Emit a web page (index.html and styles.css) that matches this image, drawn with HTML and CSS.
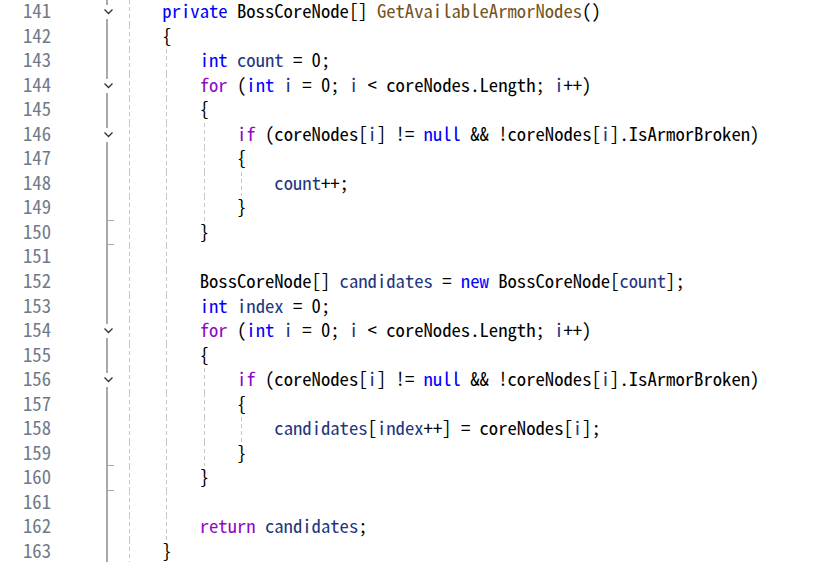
FILE: index.html
```html
<!DOCTYPE html>
<html>
<head>
<meta charset="utf-8">
<link rel="stylesheet" href="styles.css">
</head>
<body>
<div class="editor">
  <div class="row"><div class="ln">141</div><div class="fold"><svg class="chev" viewBox="0 0 11 14" width="11" height="14"><rect width="11" height="14" fill="#fff"/><polyline points="1.5,4.5 5.5,8.5 9.5,4.5" fill="none" stroke="#333" stroke-width="1.3"/></svg></div><div class="code"><span class="g"></span><span class="kw">private</span> BossCoreNode[] <span class="fn">GetAvailableArmorNodes</span>()</div></div>
  <div class="row"><div class="ln">142</div><div class="fold"></div><div class="code"><span class="g"></span>{</div></div>
  <div class="row"><div class="ln">143</div><div class="fold"></div><div class="code"><span class="g"></span><span class="g"></span><span class="kw">int</span> <span class="v">count</span> = 0;</div></div>
  <div class="row"><div class="ln">144</div><div class="fold"><svg class="chev" viewBox="0 0 11 14" width="11" height="14"><rect width="11" height="14" fill="#fff"/><polyline points="1.5,4.5 5.5,8.5 9.5,4.5" fill="none" stroke="#333" stroke-width="1.3"/></svg></div><div class="code"><span class="g"></span><span class="g"></span><span class="ctl">for</span> (<span class="kw">int</span> <span class="v">i</span> = 0; <span class="v">i</span> &lt; coreNodes.Length; <span class="v">i</span>++)</div></div>
  <div class="row"><div class="ln">145</div><div class="fold"></div><div class="code"><span class="g"></span><span class="g"></span>{</div></div>
  <div class="row"><div class="ln">146</div><div class="fold"><svg class="chev" viewBox="0 0 11 14" width="11" height="14"><rect width="11" height="14" fill="#fff"/><polyline points="1.5,4.5 5.5,8.5 9.5,4.5" fill="none" stroke="#333" stroke-width="1.3"/></svg></div><div class="code"><span class="g"></span><span class="g"></span><span class="g"></span><span class="ctl">if</span> (coreNodes[<span class="v">i</span>] != <span class="kw">null</span> &amp;&amp; !coreNodes[<span class="v">i</span>].IsArmorBroken)</div></div>
  <div class="row"><div class="ln">147</div><div class="fold"></div><div class="code"><span class="g"></span><span class="g"></span><span class="g"></span>{</div></div>
  <div class="row"><div class="ln">148</div><div class="fold"></div><div class="code"><span class="g"></span><span class="g"></span><span class="g"></span><span class="g"></span><span class="v">count</span>++;</div></div>
  <div class="row"><div class="ln">149</div><div class="fold end"></div><div class="code"><span class="g"></span><span class="g"></span><span class="g"></span>}</div></div>
  <div class="row"><div class="ln">150</div><div class="fold end"></div><div class="code"><span class="g"></span><span class="g"></span>}</div></div>
  <div class="row"><div class="ln">151</div><div class="fold"></div><div class="code"><span class="g"></span><span class="g"></span></div></div>
  <div class="row"><div class="ln">152</div><div class="fold"></div><div class="code"><span class="g"></span><span class="g"></span>BossCoreNode[] <span class="v">candidates</span> = <span class="kw">new</span> BossCoreNode[<span class="v">count</span>];</div></div>
  <div class="row"><div class="ln">153</div><div class="fold"></div><div class="code"><span class="g"></span><span class="g"></span><span class="kw">int</span> <span class="v">index</span> = 0;</div></div>
  <div class="row"><div class="ln">154</div><div class="fold"><svg class="chev" viewBox="0 0 11 14" width="11" height="14"><rect width="11" height="14" fill="#fff"/><polyline points="1.5,4.5 5.5,8.5 9.5,4.5" fill="none" stroke="#333" stroke-width="1.3"/></svg></div><div class="code"><span class="g"></span><span class="g"></span><span class="ctl">for</span> (<span class="kw">int</span> <span class="v">i</span> = 0; <span class="v">i</span> &lt; coreNodes.Length; <span class="v">i</span>++)</div></div>
  <div class="row"><div class="ln">155</div><div class="fold"></div><div class="code"><span class="g"></span><span class="g"></span>{</div></div>
  <div class="row"><div class="ln">156</div><div class="fold"><svg class="chev" viewBox="0 0 11 14" width="11" height="14"><rect width="11" height="14" fill="#fff"/><polyline points="1.5,4.5 5.5,8.5 9.5,4.5" fill="none" stroke="#333" stroke-width="1.3"/></svg></div><div class="code"><span class="g"></span><span class="g"></span><span class="g"></span><span class="ctl">if</span> (coreNodes[<span class="v">i</span>] != <span class="kw">null</span> &amp;&amp; !coreNodes[<span class="v">i</span>].IsArmorBroken)</div></div>
  <div class="row"><div class="ln">157</div><div class="fold"></div><div class="code"><span class="g"></span><span class="g"></span><span class="g"></span>{</div></div>
  <div class="row"><div class="ln">158</div><div class="fold"></div><div class="code"><span class="g"></span><span class="g"></span><span class="g"></span><span class="g"></span><span class="v">candidates</span>[<span class="v">index</span>++] = coreNodes[<span class="v">i</span>];</div></div>
  <div class="row"><div class="ln">159</div><div class="fold end"></div><div class="code"><span class="g"></span><span class="g"></span><span class="g"></span>}</div></div>
  <div class="row"><div class="ln">160</div><div class="fold end"></div><div class="code"><span class="g"></span><span class="g"></span>}</div></div>
  <div class="row"><div class="ln">161</div><div class="fold"></div><div class="code"><span class="g"></span><span class="g"></span></div></div>
  <div class="row"><div class="ln">162</div><div class="fold"></div><div class="code"><span class="g"></span><span class="g"></span><span class="ctl">return</span> <span class="v">candidates</span>;</div></div>
  <div class="row"><div class="ln">163</div><div class="fold"></div><div class="code"><span class="g"></span>}</div></div>
</div>
</body>
</html>
```

FILE: styles.css
```css
html, body {
  margin: 0;
  padding: 0;
  background: #ffffff;
  overflow: hidden;
}

.editor {
  font-family: "Noto Sans Mono CJK SC", "Noto Sans Mono CJK JP", "Liberation Mono", monospace;
  font-size: 18.67px;
  color: #000000;
  width: 837px;
  height: 562px;
  overflow: hidden;
}

.row {
  display: flex;
  height: 24.55px;
}

.ln {
  width: 51px;
  flex: none;
  text-align: right;
  color: #6f7a88;
  line-height: 20.55px;
}

.fold {
  width: 74px;
  flex: none;
  position: relative;
  background-image: linear-gradient(#a9a9a9, #a9a9a9);
  background-size: 2px 100%;
  background-position: 55px 0;
  background-repeat: no-repeat;
}

.fold.end::after {
  content: "";
  position: absolute;
  left: 56px;
  bottom: 0;
  width: 7px;
  height: 1px;
  background: #a9a9a9;
}

.chev {
  position: absolute;
  left: 52px;
  top: 5px;
  display: block;
}

.code {
  display: block;
  white-space: pre;
  height: 24.55px;
  line-height: 20.55px;
}

.g {
  display: inline-block;
  vertical-align: top;
  width: 37.34px;
  height: 24.55px;
  background-image: repeating-linear-gradient(to bottom, #c6c6c6 0, #c6c6c6 4px, transparent 4px, transparent 7px);
  background-size: 1px 100%;
  background-position: 4px 0;
  background-repeat: no-repeat;
}

.kw { color: #0000ff; }
.ctl { color: #8f08c4; }
.fn { color: #74531f; }
.v { color: #1f377f; }
```
